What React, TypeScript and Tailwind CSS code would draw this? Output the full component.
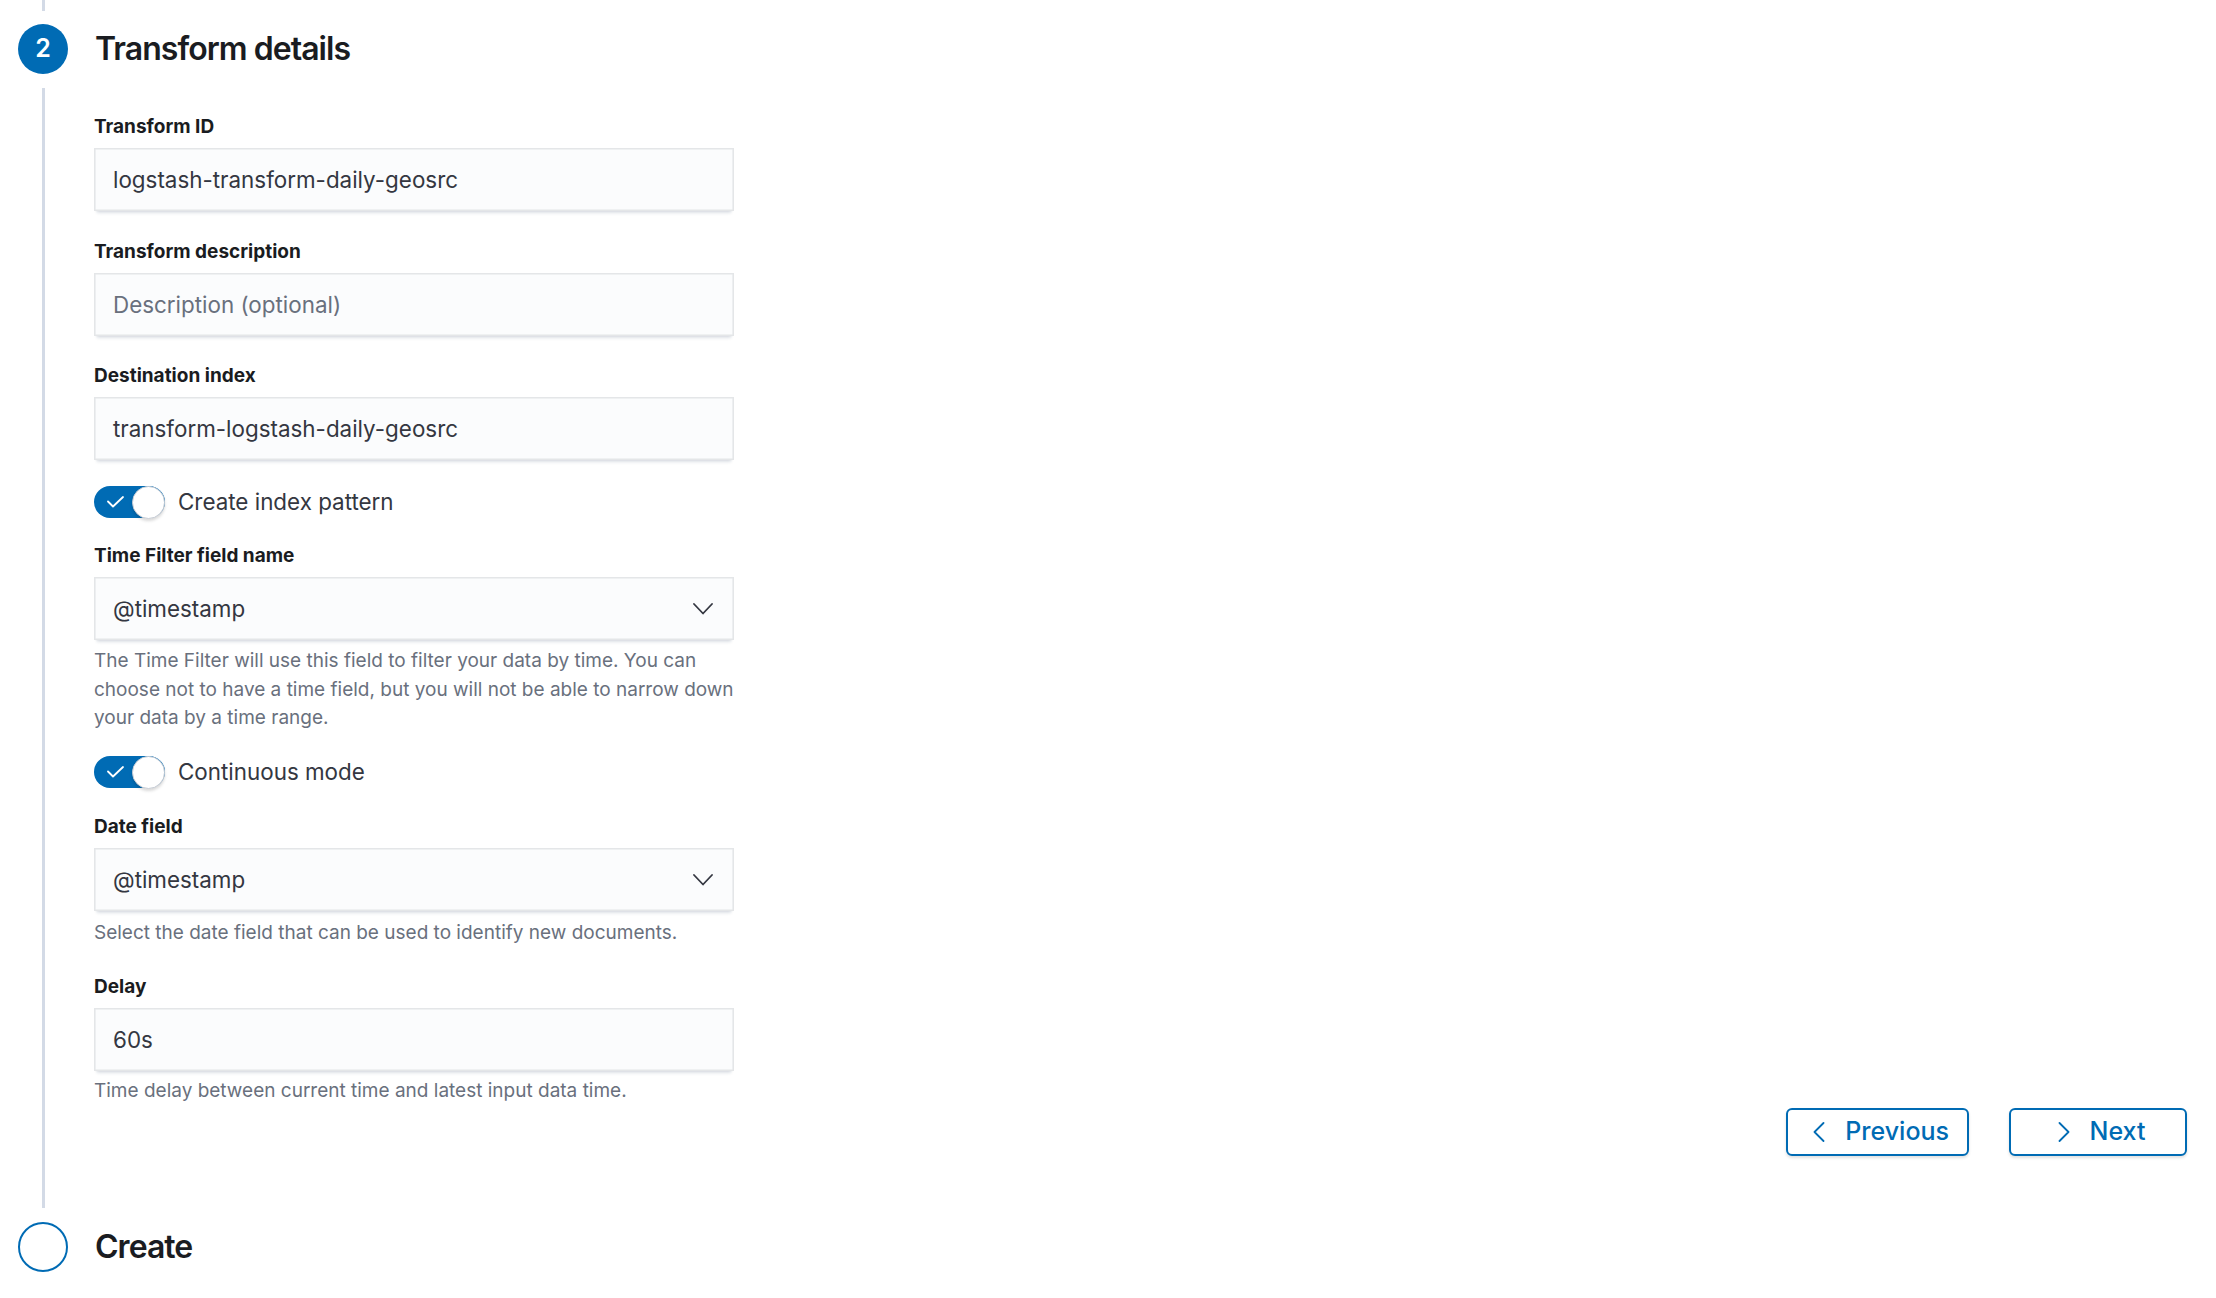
import React from "react";

const Label = ({ children, className = "" }: { children: React.ReactNode; className?: string }) => (
  <div className={`h-[26px] leading-[22px] text-[19px] font-bold text-[#1a1c21] mb-[6px] ${className}`}>{children}</div>
);

const fieldCls =
  "h-[63px] w-[640px] flex items-center justify-between px-[19px] bg-[#FBFCFD] text-[22.4px] text-[#343741] shadow-[0_2px_2px_-2px_rgba(152,162,179,0.25),0_5px_3px_-3px_rgba(152,162,179,0.3),inset_0_0_0_1.6px_rgba(32,38,48,0.1)]";

const Field = ({ children, placeholder = false }: { children: React.ReactNode; placeholder?: boolean }) => (
  <div className={fieldCls}>
    <span className={placeholder ? "text-[#69707D]" : ""}>{children}</span>
  </div>
);

const Select = ({ value }: { value: string }) => (
  <div className={fieldCls}>
    <span>{value}</span>
    <svg width="20" height="12" viewBox="0 0 20 12" className="mr-[2px]">
      <polyline points="1,1 10,10.5 19,1" fill="none" stroke="#343741" strokeWidth="1.8" strokeLinecap="round" strokeLinejoin="round" />
    </svg>
  </div>
);

const Help = ({ children, className = "" }: { children: React.ReactNode; className?: string }) => (
  <div className={`w-[660px] text-[19px] leading-[28.5px] text-[#69707D] ${className}`}>{children}</div>
);

const Toggle = ({ label, className = "" }: { label: string; className?: string }) => (
  <div className={`flex items-center h-[32px] ${className}`}>
    <div className="w-[71px] h-[32px] rounded-full bg-[#006BB4] flex items-center justify-between">
      <svg width="17" height="12" viewBox="0 0 17 12" className="ml-[13px]">
        <polyline points="1,5.5 6,10.5 16,1" fill="none" stroke="#ffffff" strokeWidth="1.8" strokeLinecap="round" strokeLinejoin="round" />
      </svg>
      <div className="w-[33px] h-[33px] rounded-full bg-white border-[1.6px] border-[#C9CED6] shadow-[0_2px_3px_rgba(0,0,0,0.15)]" />
    </div>
    <span className="ml-[13px] text-[22.4px] text-[#343741]">{label}</span>
  </div>
);

const NavButton = ({ dir, label }: { dir: "left" | "right"; label: string }) => (
  <button className="h-[48px] min-w-[178px] px-[18px] flex items-center justify-center gap-[13px] rounded-[6px] border-[2px] border-[#006BB4] bg-white text-[#006BB4] text-[25px] font-medium shadow-[0_2px_3px_rgba(0,0,0,0.12)]">
    <span className="w-[26px] h-[26px] flex items-center justify-center">
      <svg width="12" height="20" viewBox="0 0 12 20">
        {dir === "left" ? (
          <polyline points="10.5,1 1.5,10 10.5,19" fill="none" stroke="#006BB4" strokeWidth="1.8" strokeLinecap="round" strokeLinejoin="round" />
        ) : (
          <polyline points="1.5,1 10.5,10 1.5,19" fill="none" stroke="#006BB4" strokeWidth="1.8" strokeLinecap="round" strokeLinejoin="round" />
        )}
      </svg>
    </span>
    <span>{label}</span>
  </button>
);

export default function App() {
  return (
    <div className="w-[2216px] h-[1298px] bg-white overflow-hidden pl-[18px] pr-[29px] font-['Inter',sans-serif]">
      <div className="ml-[24px] w-[3px] h-[11px] bg-[#D3DAE6]" />

      <div className="mt-[13px] flex items-center h-[50px]">
        <div className="w-[50px] h-[50px] rounded-full bg-[#006BB4] text-white flex items-center justify-center text-[25px] font-semibold">
          2
        </div>
        <div className="ml-[27px] text-[32px] font-semibold tracking-[-0.03em] text-[#1a1c21]">Transform details</div>
      </div>

      <div className="ml-[24px] mt-[14px] border-l-[3px] border-[#D3DAE6] pl-[49px] pt-[28px] pb-[52px]">
        <div>
          <Label>Transform ID</Label>
          <Field>logstash-transform-daily-geosrc</Field>
        </div>
        <div className="mt-[30px]">
          <Label>Transform description</Label>
          <Field placeholder>Description (optional)</Field>
        </div>
        <div className="mt-[29px]">
          <Label>Destination index</Label>
          <Field>transform-logstash-daily-geosrc</Field>
        </div>

        <Toggle label="Create index pattern" className="mt-[26px]" />

        <div className="mt-[27px]">
          <Label>Time Filter field name</Label>
          <Select value="@timestamp" />
          <Help className="mt-[7px]">
            <div>The Time Filter will use this field to filter your data by time. You can</div>
            <div className="whitespace-nowrap">choose not to have a time field, but you will not be able to narrow down</div>
            <div>your data by a time range.</div>
          </Help>
        </div>

        <Toggle label="Continuous mode" className="mt-[23.5px]" />

        <div className="mt-[28px]">
          <Label>Date field</Label>
          <Select value="@timestamp" />
          <Help className="mt-[8px]">Select the date field that can be used to identify new documents.</Help>
        </div>

        <div className="mt-[28.5px]">
          <Label>Delay</Label>
          <Field>60s</Field>
          <Help className="mt-[6px]">Time delay between current time and latest input data time.</Help>
        </div>

        <div className="mt-[2px] flex justify-end gap-[40px]">
          <NavButton dir="left" label="Previous" />
          <NavButton dir="right" label="Next" />
        </div>
      </div>

      <div className="mt-[14px] flex items-center h-[50px]">
        <div className="w-[50px] h-[50px] rounded-full bg-white border-[2.5px] border-[#006BB4]" />
        <div className="ml-[27px] text-[32px] font-semibold tracking-[-0.03em] text-[#1a1c21]">Create</div>
      </div>
    </div>
  );
}
